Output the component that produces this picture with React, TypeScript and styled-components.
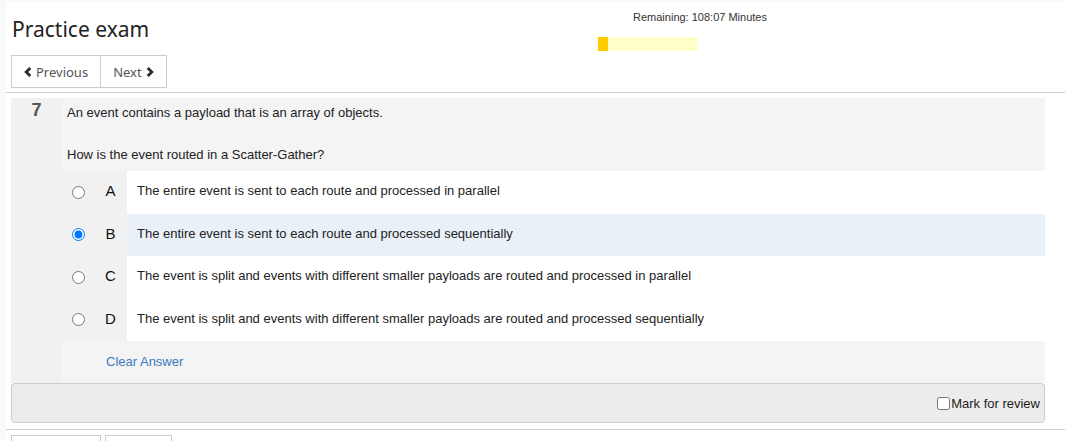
import styled, { createGlobalStyle } from "styled-components";

const GlobalStyle = createGlobalStyle`
  body {
    margin: 0;
    background: #f9f9f9;
    font-family: "Liberation Sans", Arial, sans-serif;
    color: #222;
  }
`;

const Page = styled.div`
  margin: 2px 0 0 6px;
  background: #fff;
  min-height: 460px;
`;

const Header = styled.header`
  display: flex;
  border-bottom: 1px solid #cfcfcf;
  padding: 0 0 4px 5px;
`;

const TitleBlock = styled.div`
  flex: 0 0 587px;
`;

const Title = styled.h1`
  margin: 12px 0 0 1px;
  font-family: "Noto Sans", "Open Sans", sans-serif;
  font-weight: 400;
  font-size: 21px;
  line-height: 30px;
  color: #222;
`;

const NavGroup = styled.div`
  display: flex;
  margin-top: 11px;
`;

const NavButton = styled.button<{ $joined?: boolean }>`
  display: flex;
  align-items: center;
  gap: 4px;
  height: 33px;
  padding: 0 12px;
  font-family: "Noto Sans", "Open Sans", sans-serif;
  font-size: 13px;
  color: #555;
  background: #fff;
  border: 1px solid #ccc;
  margin-left: ${({ $joined }) => ($joined ? "-1px" : "0")};
  cursor: pointer;
`;

const Timer = styled.div`
  width: 204px;
  padding-top: 8px;
`;

const TimerText = styled.div`
  font-size: 11px;
  line-height: 14px;
  text-align: center;
  color: #333;
`;

const TimerTrack = styled.div`
  width: 100px;
  height: 14px;
  margin-top: 13px;
  background: #ffffcc;
`;

const TimerFill = styled.div`
  height: 100%;
  background: #ffcc00;
`;

const Body = styled.main`
  padding: 5px 20px 6px 5px;
  border-bottom: 1px solid #cfcfcf;
`;

const QuestionCard = styled.section`
  display: flex;
`;

const NumberCell = styled.div`
  flex: 0 0 51px;
  background: #f1f1f1;
  text-align: center;
  font-weight: 700;
  font-size: 18px;
  line-height: 24px;
  color: #555;
`;

const QuestionMain = styled.div`
  flex: 1;
  background: #f1f1f1;
`;

const Prompt = styled.div`
  background: #f4f4f4;
  padding: 6px 5px 8px;
  font-size: 13px;
  line-height: 17px;

  p {
    margin: 0 0 25px;
  }
  p:last-child {
    margin: 0;
  }
`;

const OptionRow = styled.label`
  display: grid;
  grid-template-columns: 32px 33px 1fr;
  height: 42.5px;
  cursor: pointer;
`;

const RadioCell = styled.span`
  display: flex;
  align-items: center;
  justify-content: center;

  input {
    margin: 0;
    width: 13px;
    height: 13px;
  }
`;

const LetterCell = styled.span`
  display: flex;
  align-items: center;
  justify-content: center;
  padding-bottom: 3px;
  font-size: 15px;
  color: #111;
`;

const OptionText = styled.span<{ $selected: boolean }>`
  display: flex;
  align-items: center;
  padding: 0 0 3px 10px;
  font-size: 13px;
  background: ${({ $selected }) => ($selected ? "#e9f0f8" : "#fff")};
`;

const ClearRow = styled.div`
  box-sizing: border-box;
  height: 42px;
  display: flex;
  align-items: center;
  padding: 0 0 1px 44px;
  background: #f4f4f4;
`;

const ClearLink = styled.a`
  font-size: 13px;
  color: #3a7bbf;
  text-decoration: none;
  cursor: pointer;
`;

const ReviewBar = styled.div`
  height: 38px;
  display: flex;
  align-items: center;
  justify-content: flex-end;
  padding-right: 4px;
  background: #ececec;
  border: 1px solid #cdcdcd;
  border-radius: 4px;
`;

const ReviewLabel = styled.label`
  display: flex;
  align-items: center;
  gap: 1px;
  font-size: 13px;
  color: #222;

  input {
    margin: 0;
    width: 13px;
    height: 13px;
  }
`;

const BottomNav = styled.div`
  display: flex;
  gap: 4px;
  padding: 5px 0 0 5px;
`;

const Chevron = ({ dir }: { dir: "left" | "right" }) => (
  <svg width="8" height="10" viewBox="0 0 8 10">
    <path
      d={dir === "left" ? "M6.3 1 L2.2 5 L6.3 9" : "M1.7 1 L5.8 5 L1.7 9"}
      fill="none"
      stroke="#2b2b2b"
      strokeWidth="2.8"
    />
  </svg>
);

const options = [
  { letter: "A", text: "The entire event is sent to each route and processed in parallel" },
  { letter: "B", text: "The entire event is sent to each route and processed sequentially" },
  { letter: "C", text: "The event is split and events with different smaller payloads are routed and processed in parallel" },
  { letter: "D", text: "The event is split and events with different smaller payloads are routed and processed sequentially" },
];

const selected = "B";
const elapsed = 10;

export default function App() {
  return (
    <>
      <GlobalStyle />
      <Page>
        <Header>
          <TitleBlock>
            <Title>Practice exam</Title>
            <NavGroup>
              <NavButton>
                <Chevron dir="left" />
                Previous
              </NavButton>
              <NavButton $joined>
                Next
                <Chevron dir="right" />
              </NavButton>
            </NavGroup>
          </TitleBlock>
          <Timer>
            <TimerText>Remaining: 108:07 Minutes</TimerText>
            <TimerTrack>
              <TimerFill style={{ width: `${elapsed}%` }} />
            </TimerTrack>
          </Timer>
        </Header>
        <Body>
          <QuestionCard>
            <NumberCell>7</NumberCell>
            <QuestionMain>
              <Prompt>
                <p>An event contains a payload that is an array of objects.</p>
                <p>How is the event routed in a Scatter-Gather?</p>
              </Prompt>
              {options.map((o) => (
                <OptionRow key={o.letter}>
                  <RadioCell>
                    <input type="radio" name="answer" defaultChecked={o.letter === selected} />
                  </RadioCell>
                  <LetterCell>{o.letter}</LetterCell>
                  <OptionText $selected={o.letter === selected}>{o.text}</OptionText>
                </OptionRow>
              ))}
              <ClearRow>
                <ClearLink>Clear Answer</ClearLink>
              </ClearRow>
            </QuestionMain>
          </QuestionCard>
          <ReviewBar>
            <ReviewLabel>
              <input type="checkbox" />
              Mark for review
            </ReviewLabel>
          </ReviewBar>
        </Body>
        <BottomNav>
          <NavButton>
            <Chevron dir="left" />
            Previous
          </NavButton>
          <NavButton>
            Next
            <Chevron dir="right" />
          </NavButton>
        </BottomNav>
      </Page>
    </>
  );
}
